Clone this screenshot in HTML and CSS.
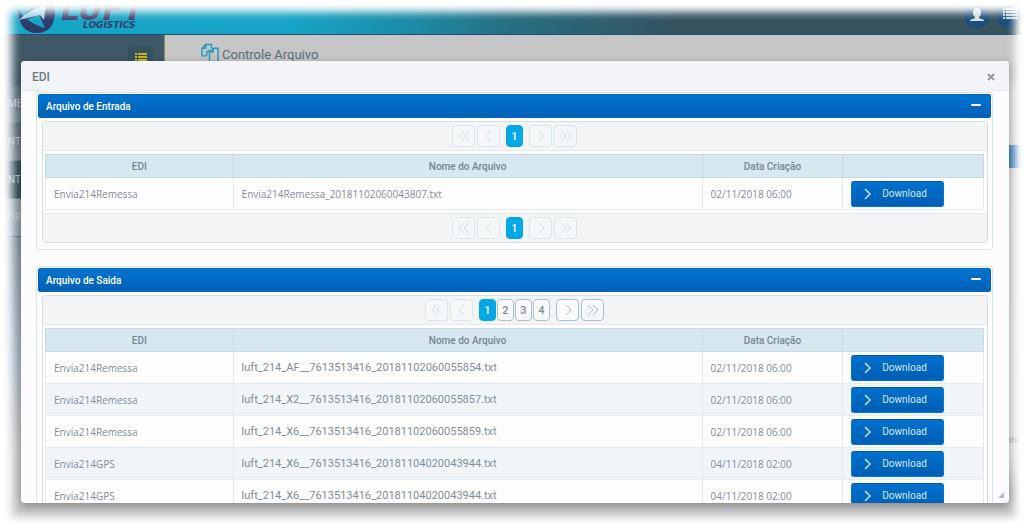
FILE: index.html
```html
<!DOCTYPE html>
<html lang="pt-BR">
<head>
<meta charset="utf-8">
<title>Controle Arquivo</title>
<link rel="stylesheet" href="styles.css">
</head>
<body>
<svg class="defs" aria-hidden="true">
  <symbol id="first" viewBox="0 0 14 12"><path d="M7 1 2 6l5 5M12 1 7 6l5 5"/></symbol>
  <symbol id="prev" viewBox="0 0 14 12"><path d="M9 1 4 6l5 5"/></symbol>
  <symbol id="next" viewBox="0 0 14 12"><path d="m5 1 5 5-5 5"/></symbol>
  <symbol id="last" viewBox="0 0 14 12"><path d="m2 1 5 5-5 5M7 1l5 5-5 5"/></symbol>
</svg>
<div class="page">
  <header class="topbar">
    <svg class="logo" viewBox="0 0 125 36" role="img" aria-label="Luft Logistics">
      <path d="M1 9Q2 33 20 33 36 33 38 14L38 4 27 3Q10 7 4 22L22 15 28 28Q8 22 1 9Z" class="logo-ink"/>
      <path d="M2 20Q12 9 29 5L27 20 23 15Z" class="logo-light"/>
      <text x="44" y="20" class="logo-name">LUFT</text>
      <text x="66" y="28" class="logo-sub">LOGISTICS</text>
    </svg>
    <div class="top-actions">
      <button class="round" aria-label="Usuário"><svg viewBox="0 0 26 26"><path d="M13 6c3 0 4 2 4 5 0 2-1 3-2 4v1l5 2v1H6v-1l5-2v-1c-1-1-2-2-2-4 0-3 1-5 4-5Z" fill="#d5dde1"/></svg></button>
      <button class="round" aria-label="Menu"><svg viewBox="0 0 26 26"><path d="M6 7h2m1 0h12M6 10h2m1 0h12M6 13h2m1 0h12M6 16h2m1 0h12" stroke="#c6d6de" stroke-width="2"/></svg></button>
    </div>
  </header>
  <div class="columns">
    <nav class="sidebar">
      <div class="side-top"><button class="side-toggle" aria-label="Recolher menu"><svg viewBox="0 0 12 12"><path d="M0 1h2m1 0h9M0 4h2m1 0h9M0 7h2m1 0h9M0 10h2m1 0h9" stroke="#c8b51a" stroke-width="2"/></svg></button></div>
      <a class="side-item" href="#">ME</a>
      <a class="side-item" href="#">NTR</a>
      <a class="side-item active" href="#">NT</a>
      <a class="side-item light" href="#">OP</a>
      <div class="side-rest"></div>
    </nav>
    <main class="content">
      <h1><svg viewBox="0 0 20 20"><path d="M7 13H2V5l4-4h6v4M6 1v4H2M10 19V9l4-4h5v14zM14 5v4h-4M7 13V9l3-2" fill="none" stroke="#2299bb" stroke-width="1.5"/></svg>Controle Arquivo</h1>
      <div class="content-bar"></div>
      <p class="content-note">nts</p>
    </main>
  </div>
</div>

<section class="dialog" role="dialog" aria-labelledby="dlg-title">
  <header class="dialog-head"><h2 id="dlg-title">EDI</h2><button class="close" aria-label="Fechar"><svg viewBox="0 0 8 8"><path d="m1 1 6 6M7 1 1 7" stroke="#8f9ba3" stroke-width="2"/></svg></button></header>
  <div class="dialog-body">
    <section class="panel">
      <header class="panel-head"><h3>Arquivo de Entrada</h3><button class="toggle" aria-label="Recolher"></button></header>
      <div class="datatable">
        <div class="pager">
          <button class="nav" disabled aria-label="Primeira"><svg><use href="#first"/></svg></button><button class="nav" disabled aria-label="Anterior"><svg><use href="#prev"/></svg></button>
          <span class="numbers"><button class="num current">1</button></span>
          <button class="nav" disabled aria-label="Próxima"><svg><use href="#next"/></svg></button><button class="nav" disabled aria-label="Última"><svg><use href="#last"/></svg></button>
        </div>
        <div class="table-wrap"><table>
          <colgroup><col class="c20"><col class="c50"><col class="c15"><col class="c15"></colgroup>
          <thead><tr><th>EDI</th><th>Nome do Arquivo</th><th>Data Criação</th><th></th></tr></thead>
          <tbody>
            <tr><td>Envia214Remessa</td><td>Envia214Remessa_20181102060043807.txt</td><td>02/11/2018 06:00</td><td><button class="download"><svg><use href="#next"/></svg><span>Download</span></button></td></tr>
          </tbody>
        </table></div>
        <div class="pager bottom">
          <button class="nav" disabled aria-label="Primeira"><svg><use href="#first"/></svg></button><button class="nav" disabled aria-label="Anterior"><svg><use href="#prev"/></svg></button>
          <span class="numbers"><button class="num current">1</button></span>
          <button class="nav" disabled aria-label="Próxima"><svg><use href="#next"/></svg></button><button class="nav" disabled aria-label="Última"><svg><use href="#last"/></svg></button>
        </div>
      </div>
    </section>
    <section class="panel">
      <header class="panel-head"><h3>Arquivo de Saida</h3><button class="toggle" aria-label="Recolher"></button></header>
      <div class="datatable">
        <div class="pager">
          <button class="nav" disabled aria-label="Primeira"><svg><use href="#first"/></svg></button><button class="nav" disabled aria-label="Anterior"><svg><use href="#prev"/></svg></button>
          <span class="numbers"><button class="num current">1</button><button class="num">2</button><button class="num">3</button><button class="num">4</button></span>
          <button class="nav" aria-label="Próxima"><svg><use href="#next"/></svg></button><button class="nav" aria-label="Última"><svg><use href="#last"/></svg></button>
        </div>
        <div class="table-wrap"><table>
          <colgroup><col class="c20"><col class="c50"><col class="c15"><col class="c15"></colgroup>
          <thead><tr><th>EDI</th><th>Nome do Arquivo</th><th>Data Criação</th><th></th></tr></thead>
          <tbody>
            <tr><td>Envia214Remessa</td><td class="outfile">luft_214_AF__7613513416_20181102060055854.txt</td><td>02/11/2018 06:00</td><td><button class="download"><svg><use href="#next"/></svg><span>Download</span></button></td></tr>
            <tr><td>Envia214Remessa</td><td class="outfile">luft_214_X2__7613513416_20181102060055857.txt</td><td>02/11/2018 06:00</td><td><button class="download"><svg><use href="#next"/></svg><span>Download</span></button></td></tr>
            <tr><td>Envia214Remessa</td><td class="outfile">luft_214_X6__7613513416_20181102060055859.txt</td><td>02/11/2018 06:00</td><td><button class="download"><svg><use href="#next"/></svg><span>Download</span></button></td></tr>
            <tr><td>Envia214GPS</td><td class="outfile">luft_214_X6__7613513416_20181104020043944.txt</td><td>04/11/2018 02:00</td><td><button class="download"><svg><use href="#next"/></svg><span>Download</span></button></td></tr>
            <tr><td>Envia214GPS</td><td class="outfile">luft_214_X6__7613513416_20181104020043944.txt</td><td>04/11/2018 02:00</td><td><button class="download"><svg><use href="#next"/></svg><span>Download</span></button></td></tr>
          </tbody>
        </table></div>
      </div>
    </section>
  </div>
  <svg class="grip" viewBox="0 0 8 8"><path d="M8 0v8H0z" fill="#b4bcc4"/></svg>
</section>
</body>
</html>
```

FILE: styles.css
```css
* { box-sizing: border-box; }
body {
  margin: 0;
  height: 100vh;
  overflow: hidden;
  position: relative;
  background: #fff;
  font-family: Roboto, "Open Sans", sans-serif;
  font-size: 10px;
  color: #7f8f99;
}
h1, h2, h3, p { margin: 0; font-weight: 500; }
button { font: inherit; margin: 0; padding: 0; border: 0; background: none; }
.defs { position: absolute; width: 0; height: 0; }

.page { height: 100%; display: flex; flex-direction: column; }
.page::after {
  content: "";
  position: absolute;
  inset: 0;
  box-shadow: inset 0 13px 9px -1px #fff, inset 13px 0 10px -1px #fff, inset -9px 0 8px 0 #fff, inset 0 -14px 9px -1px #fff;
}
.topbar {
  flex: none;
  height: 35px;
  padding: 0 0 0 17px;
  display: flex;
  justify-content: space-between;
  background: linear-gradient(90deg, #17a5c5 0 28%, #1d8ca6 40%, #286e80 50%, #34535f 66%);
  border-bottom: 1px solid #1c4f7d;
}
.logo { width: 125px; height: 36px; overflow: visible; }
.logo-ink { fill: #2f3a6b; }
.logo-light { fill: #9ad2e4; }
.logo-name, .logo-sub { font-family: "DejaVu Sans", sans-serif; font-weight: bold; font-style: italic; fill: #42426f; }
.logo-name { font-size: 30px; }
.logo-sub { font-size: 9px; fill: #2f4070; }
.top-actions { display: flex; gap: 7px; padding-top: 2px; margin-right: 1px; }
.round { width: 26px; height: 26px; border-radius: 50%; background: #1d4d7c; }
.round svg { display: block; width: 26px; height: 26px; }

.columns { flex: 1; min-height: 0; display: flex; }
.sidebar { width: 165px; flex: none; display: flex; flex-direction: column; background: #405865; }
.side-top { height: 50px; padding: 11px 11px 0; display: flex; justify-content: flex-end; border-right: 1px solid #8d8d62; }
.side-toggle { width: 25px; height: 26px; background: #34535f; border-radius: 3px; }
.side-toggle svg { width: 12px; height: 12px; display: block; margin: 0 auto; }
.side-item { height: 38px; line-height: 38px; padding-left: 8px; color: #b4bfc5; font-size: 10px; text-decoration: none; border-bottom: 1px solid #566b76; background: linear-gradient(#4c6370, #6d818c); }
.side-item.active { background: #2d4755; }
.side-item.light { background: #8d9da6; }
.side-rest { flex: 1; background: linear-gradient(#8193a0, #9dafbd 35%, #c6c6c6 75%); }
.content { flex: 1; background: linear-gradient(#c6c6c6 0 30px, #dedede 60px, #e6e6e6 85%, #c6c6c6 92%); }
.content h1 { display: flex; align-items: flex-start; gap: 3px; padding: 8px 35px 0; font-size: 13px; line-height: 24px; font-weight: 400; color: #5c6d77; }
.content h1 svg { width: 19px; height: 20px; }
.content-bar { margin-top: 78px; height: 23px; background: #3f80bd; }
.content-note { margin-top: 267px; padding-right: 5px; text-align: right; font-size: 9px; color: #aaa; }

.dialog {
  position: absolute;
  inset: 61px 15px 27px 21px;
  display: flex;
  flex-direction: column;
  overflow: hidden;
  background: #fcfcfe;
  border-radius: 4px;
  box-shadow: 0 3px 10px 0 rgba(0, 0, 0, .32);
}
.dialog-head { flex: none; height: 30px; padding: 2px 14px 0 11px; display: flex; align-items: center; justify-content: space-between; background: #f3f4f7; border-bottom: 1px solid #e9ebef; }
.dialog-head h2 { font-size: 12px; color: #6c7c87; }
.close, .close svg { display: block; width: 8px; height: 8px; }
.dialog-body { flex: 1; min-height: 0; overflow: hidden; padding: 1px 16px 0 15px; }
.grip { position: absolute; right: 5px; bottom: 5px; width: 6px; height: 6px; }

.panel { border: 1px solid #d3e5ec; border-radius: 3px; padding: 1px; margin-bottom: 16px; background: #fff; }
.panel-head { height: 24px; padding: 0 9px 0 7px; display: flex; align-items: center; justify-content: space-between; border: 1px solid #0a66b0; border-radius: 2px; background: linear-gradient(#0074d0, #0061b8); color: #fff; }
.panel-head h3 { font-size: 10px; }
.toggle { width: 10px; height: 2px; margin-bottom: 3px; background: #fff; border-radius: 1px; }
.datatable { margin: 3px 3px 5px 4px; border: 1px solid #d7dce0; border-radius: 4px; overflow: hidden; }
.pager { height: 29px; padding-right: 1px; display: flex; align-items: center; justify-content: center; gap: 2px; background: #f3f4f6; border-bottom: 1px solid #e4ebee; }
.pager.bottom { border-top: 1px solid #e4ebee; border-bottom: 0; }
.numbers { display: flex; gap: 1px; margin: 0 4px; }
.nav, .num { height: 22px; border: 1px solid #a9c2cb; border-radius: 4px; background: #f8fafb; }
.nav { width: 23px; display: grid; place-items: center; }
.nav:disabled { border-color: #d9e7ec; background: #f4f6f8; }
.nav svg { width: 14px; height: 12px; fill: none; stroke: #a9bfc8; }
.nav:disabled svg { stroke: #d0e0e6; }
.num { width: 17px; color: #7f8f99; font-size: 11px; font-weight: 500; }
.num.current { background: #00a8e8; border-color: #00a8e8; color: #fff; }

.table-wrap { padding: 3px 3px 3px 2px; }
table { width: 100%; table-layout: fixed; border-collapse: collapse; }
.c20 { width: 20%; }
.c50 { width: 50%; }
.c15 { width: 15%; }
th { height: 23px; padding: 0; background: #d7e8f0; border: 1px solid #c5dce5; font-size: 10px; font-weight: 500; color: #758690; }
td { height: 32px; padding: 0 7px 0 8px; border: 1px solid #e3ebf0; white-space: nowrap; background: #fdfdfe; font-family: "Open Sans", "Noto Sans", sans-serif; }
tbody tr:nth-child(even) td { background: #f2f5f8; }
.outfile { font-family: Roboto, sans-serif; font-size: 11px; }
.download { display: flex; align-items: center; width: 93px; height: 26px; padding: 0 8px; gap: 8px; border: 1px solid #007cd0; border-top-color: #075ba0; border-radius: 3px; background: linear-gradient(#0071ce, #005eb5); color: #d4e7f5; font-family: Roboto, sans-serif; }
.download svg { width: 14px; height: 12px; fill: none; stroke: #c5dff2; stroke-width: 1.5; }
```
